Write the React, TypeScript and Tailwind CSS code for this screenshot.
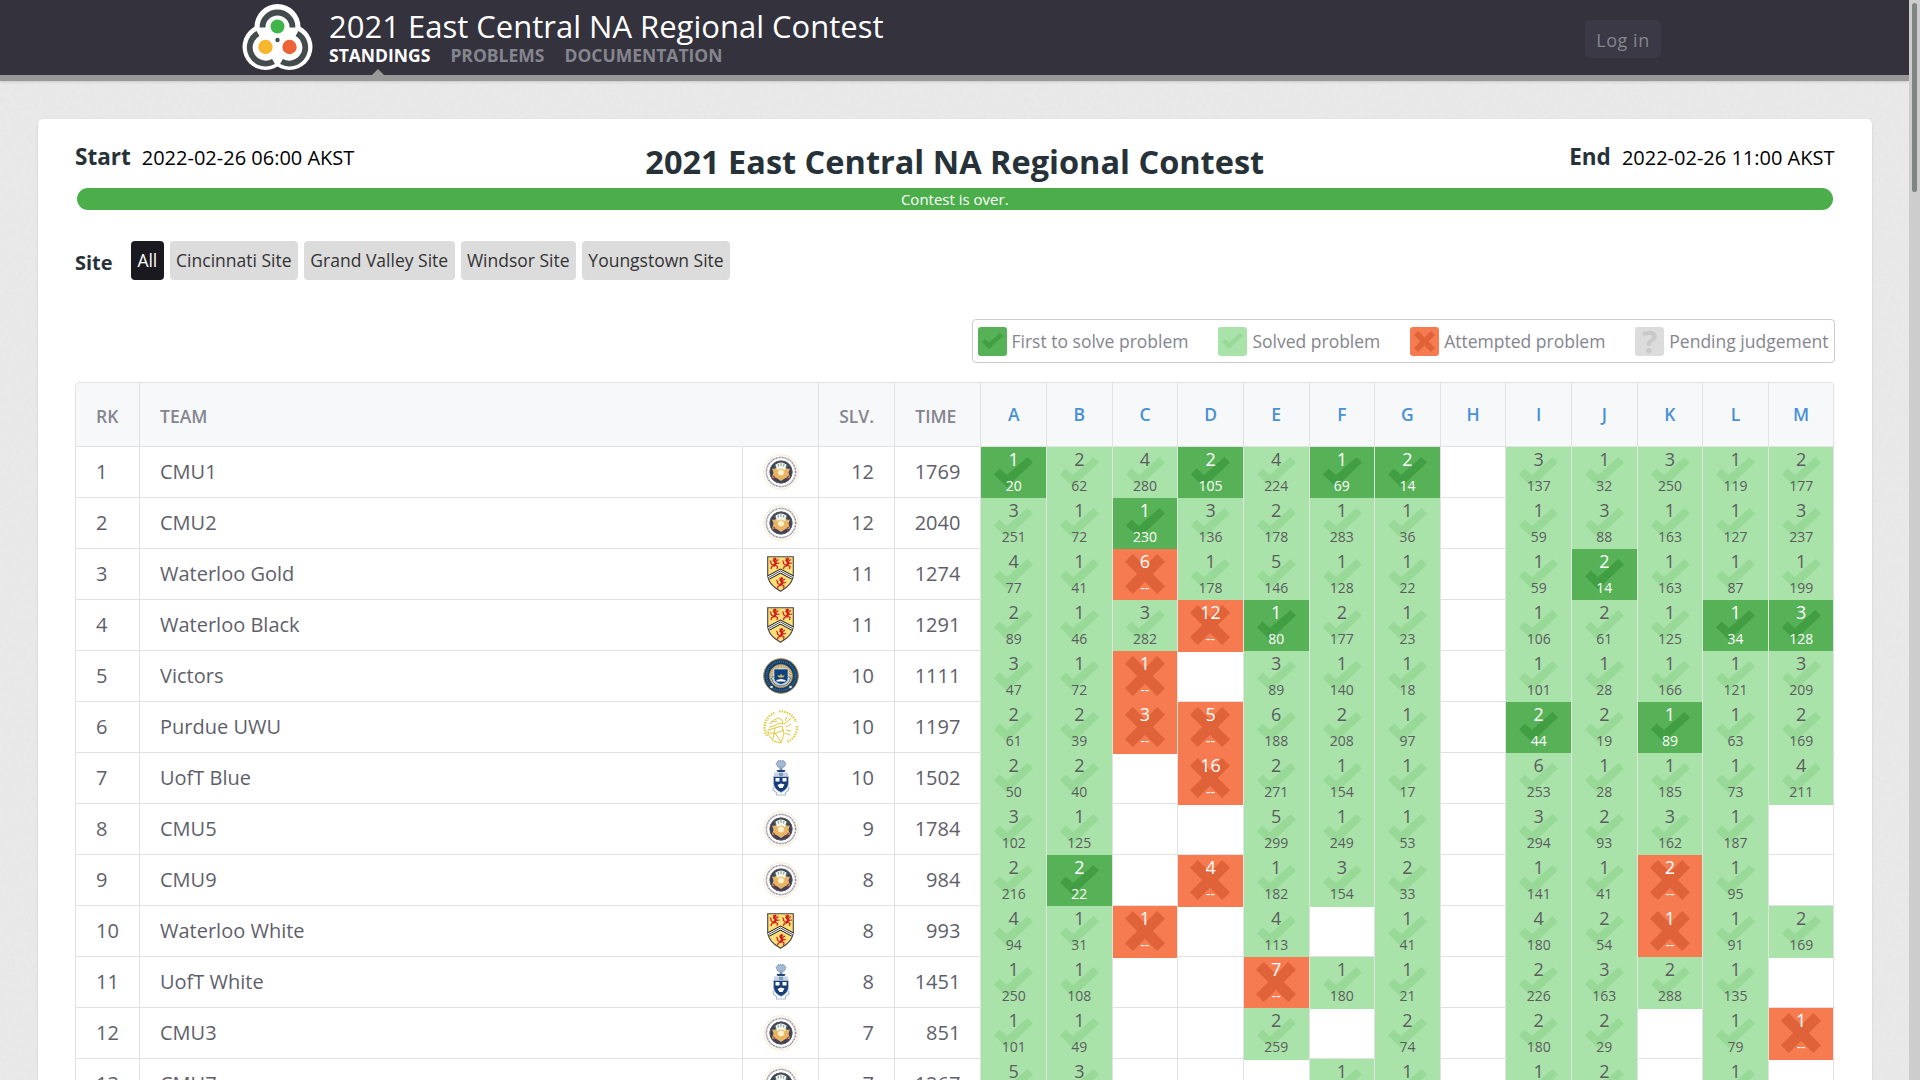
import React from "react";

type Cell = string;

const problems = "ABCDEFGHIJKLM".split("");

// Cell notation: "tries/time", "!" prefix = first to solve, "x" prefix = failed, "" = untouched.
type Row = { rk: number; team: string; logo: string; slv: number; time: number; cells: string };

const rows: Row[] = [
  { rk: 1, team: "CMU1", logo: "cmu", slv: 12, time: 1769, cells: "!1/20,2/62,4/280,!2/105,4/224,!1/69,!2/14,,3/137,1/32,3/250,1/119,2/177" },
  { rk: 2, team: "CMU2", logo: "cmu", slv: 12, time: 2040, cells: "3/251,1/72,!1/230,3/136,2/178,1/283,1/36,,1/59,3/88,1/163,1/127,3/237" },
  { rk: 3, team: "Waterloo Gold", logo: "waterloo", slv: 11, time: 1274, cells: "4/77,1/41,x6,1/178,5/146,1/128,1/22,,1/59,!2/14,1/163,1/87,1/199" },
  { rk: 4, team: "Waterloo Black", logo: "waterloo", slv: 11, time: 1291, cells: "2/89,1/46,3/282,x12,!1/80,2/177,1/23,,1/106,2/61,1/125,!1/34,!3/128" },
  { rk: 5, team: "Victors", logo: "michigan", slv: 10, time: 1111, cells: "3/47,1/72,x1,,3/89,1/140,1/18,,1/101,1/28,1/166,1/121,3/209" },
  { rk: 6, team: "Purdue UWU", logo: "purdue", slv: 10, time: 1197, cells: "2/61,2/39,x3,x5,6/188,2/208,1/97,,!2/44,2/19,!1/89,1/63,2/169" },
  { rk: 7, team: "UofT Blue", logo: "uoft", slv: 10, time: 1502, cells: "2/50,2/40,,x16,2/271,1/154,1/17,,6/253,1/28,1/185,1/73,4/211" },
  { rk: 8, team: "CMU5", logo: "cmu", slv: 9, time: 1784, cells: "3/102,1/125,,,5/299,1/249,1/53,,3/294,2/93,3/162,1/187," },
  { rk: 9, team: "CMU9", logo: "cmu", slv: 8, time: 984, cells: "2/216,!2/22,,x4,1/182,3/154,2/33,,1/141,1/41,x2,1/95," },
  { rk: 10, team: "Waterloo White", logo: "waterloo", slv: 8, time: 993, cells: "4/94,1/31,x1,,4/113,,1/41,,4/180,2/54,x1,1/91,2/169" },
  { rk: 11, team: "UofT White", logo: "uoft", slv: 8, time: 1451, cells: "1/250,1/108,,,x7,1/180,1/21,,2/226,3/163,2/288,1/135," },
  { rk: 12, team: "CMU3", logo: "cmu", slv: 7, time: 851, cells: "1/101,1/49,,,2/259,,2/74,,2/180,2/29,,1/79,x1" },
  { rk: 13, team: "CMU7", logo: "cmu", slv: 7, time: 1267, cells: "5/133,3/124,,,,1/217,1/48,,1/236,2/62,,1/187," },
];

function Check({ color, className }: { color: string; className: string }) {
  return (
    <svg viewBox="0 0 39 30" preserveAspectRatio="none" className={className} fill={color}>
      <path d="M0 17.5 5.500 11.500 13 18 33.500 0 39 5.500 13 30Z" />
    </svg>
  );
}

function Cross({ color, className }: { color: string; className: string }) {
  return (
    <svg viewBox="0 0 40 40" className={className} fill={color}>
      <path d="M7.800 0 20 12.200 32.200 0 40 7.800 27.800 20 40 32.200 32.200 40 20 27.800 7.800 40 0 32.200 12.200 20 0 7.800Z" />
    </svg>
  );
}

function CmuLogo() {
  return (
    <svg viewBox="0 0 36 36" className="size-9">
      <circle cx="18" cy="18" r="17.200" fill="#fff" stroke="#f6e3bd" strokeWidth=".8" />
      <circle cx="18" cy="18" r="14.600" fill="none" stroke="#8a8a9a" strokeWidth="1.600" strokeDasharray="1.200 .6 .7 .5" />
      <circle cx="18" cy="18" r="11.200" fill="#41405a" stroke="#55584f" strokeWidth=".9" />
      <path d="M11 11.500q7-6 14 0l-2 4H13Z" fill="#47705c" />
      <path d="M9 14.500q3 1 5-1l4 1 4-1q2 2 5 1l-1.500 4 1.500 5-4.500.5-4.500 3-4.500-3-4.500-.5 1.500-5Z" fill="#e8b565" />
      <path d="M12.500 10.500q5.500-4 11 0L22 16h-8Z" fill="#f2f5ee" />
      <path d="M15 9.500l.5 3M18 9v3M21 9.500l-.5 3" stroke="#4d7368" strokeWidth=".7" />
      <circle cx="18" cy="18.500" r="3.600" fill="#fdf0c8" stroke="#e3a850" strokeWidth=".8" />
      <path d="M10 22l2 1-1 3M26 22l-2 1 1 3" stroke="#8c3551" strokeWidth="1" fill="none" />
    </svg>
  );
}

function Lion({ x, y }: { x: number; y: number }) {
  return (
    <g transform={`translate(${x} ${y})`} fill="none" stroke="#cf1d1d">
      <path d="M6.500 1 4.500 3.500 6.500 6 4 9" strokeWidth="2.200" />
      <path d="M3.500 1.500 6.500 2.500M6 4.500 9 2.500M6.500 6.500 10 6M5.500 8 8 9.500 7.500 12M4.500 8.500 2 10 1.500 12M3.500 8Q1 7 1.500 5L.5 3.500" strokeWidth="1.200" />
    </g>
  );
}

function WaterlooLogo() {
  return (
    <svg viewBox="0 0 27 36" className="h-9 w-[27px]">
      <path d="M.7.7h25.600V18c0 8-5 12.500-12.800 17.200C5.700 30.500.7 26 .7 18Z" fill="#fedf78" stroke="#444" strokeWidth="1.100" />
      <Lion x={2.500} y={1} />
      <Lion x={15} y={1} />
      <Lion x={9} y={20.500} />
      <path d="M1.500 21.500 13.500 15 25.500 21.500" fill="none" stroke="#151515" strokeWidth="4.600" />
      <path d="M1.500 21.500 13.500 15 25.500 21.500" fill="none" stroke="#fff" strokeWidth="2.600" />
      <path d="M1.500 21.500 13.500 15 25.500 21.500" fill="none" stroke="#151515" strokeWidth=".8" />
    </svg>
  );
}

function MichiganLogo() {
  return (
    <svg viewBox="0 0 36 36" className="size-9">
      <circle cx="18" cy="18" r="17.300" fill="#153e68" stroke="#a88b50" strokeWidth="1" />
      <circle cx="18" cy="18" r="14.500" fill="none" stroke="#456e88" strokeWidth="1.800" strokeDasharray="1 1" />
      <circle cx="18" cy="18" r="11.500" fill="#d9d2ae" stroke="#a88b50" strokeWidth=".8" />
      <circle cx="18" cy="18" r="9.500" fill="none" stroke="#b3965a" strokeWidth="3" strokeDasharray=".7 .9" />
      <path d="M8.500 20q2 8 9.500 8t9.500-8l-3-2h-13Z" fill="#c9d3da" stroke="#5b7890" strokeWidth=".9" />
      <path d="M11 11h14v9.500q0 4-7 6-7-2-7-6Z" fill="#0d407f" stroke="#e9edf0" strokeWidth=".6" />
      <path d="M14 17.500h3l1-2 1 2h3l-2 2h-4Z" fill="#d5b35c" />
      <path d="M13.500 22l4.500-1 4.500 1v1.500h-9Z" fill="#fff" />
      <circle cx="8.500" cy="29" r="1.300" fill="#dfe9e9" />
      <circle cx="27.500" cy="29" r="1.300" fill="#dfe9e9" />
    </svg>
  );
}

function PurdueLogo() {
  return (
    <svg viewBox="0 0 36 36" className="size-9" fill="none" stroke="#e0ca3b">
      <path d="M4 27A16 16 0 0 1 12 3.500M16 2.500A16 16 0 0 1 33 13M34 17A16 16 0 0 1 24 33" strokeWidth="2.200" strokeDasharray="1.500 1.100" />
      <path d="M7 15q3-5 8-6l4 2 1 4-4-1-5 3-5 1M5 21l14-4 2 8-3 9-8-2-5-7ZM12 19l-2 11M5 24l7 0 6 9M11 25l10-4M8 13l6-1M21 15l4-3M23 18l5-3M23 21l5 1M22 24l5 2M22 12l2-4M25 12l3-3" strokeWidth="1" />
    </svg>
  );
}

function UoftLogo() {
  return (
    <svg viewBox="0 0 18 36" className="h-9 w-[18px]">
      <path d="M6 .8h6l2 3-2 3.400h-6l-2-3.400Z" fill="#a5b9d0" stroke="#6c8ab0" strokeWidth="1" strokeDasharray="1.200 .6" />
      <path d="M7.500 7.500h3v3h-3Z" fill="#7794b6" />
      <path d="M4.500 10h9l-1 2h-7Z" fill="#24477e" />
      <path d="M2 12.500h5v4H2ZM11 12.500h5v4h-5Z" fill="#c4d2e3" />
      <path d="M7 12.500h4v4H7Z" fill="#7f9bbe" />
      <path d="M1.500 16.500h15V23q0 6-7.500 9.500Q1.500 29 1.500 23Z" fill="#173d78" stroke="#afc1d9" strokeWidth=".8" />
      <path d="M3.500 18h4v3.500h-4ZM10.500 18h4v3.500h-4ZM5.500 25l3.500-1.500 3.500 1-2 3.500H7.500Z" fill="#fff" />
      <path d="M1.200 27v3l3.300 2.500v2.500h9v-2.500l3.300-2.500v-3" fill="none" stroke="#a8bdd7" strokeWidth="1.200" />
    </svg>
  );
}

function TeamLogo({ kind }: { kind: string }) {
  if (kind === "cmu") return <CmuLogo />;
  if (kind === "waterloo") return <WaterlooLogo />;
  if (kind === "michigan") return <MichiganLogo />;
  if (kind === "purdue") return <PurdueLogo />;
  return <UoftLogo />;
}

function SiteLogo() {
  return (
    <svg viewBox="0 0 71 66" className="h-[66px] w-[71px] shrink-0">
      <g fill="#fff">
        <circle cx="35.500" cy="23" r="23" />
        <circle cx="23.500" cy="43" r="23" />
        <circle cx="47.500" cy="43" r="23" />
      </g>
      <g fill="none" stroke="#434b4d" strokeWidth="5.800">
        <path d="M20.500 23.500A15 15 0 0 1 50.500 23.500" />
        <path d="M16 29.500A15.500 15.500 0 0 0 31.500 57.500" />
        <path d="M55 29.500A15.500 15.500 0 0 1 39.500 57.500" />
      </g>
      <circle cx="35.500" cy="22.500" r="7" fill="#40b54a" />
      <circle cx="23.500" cy="43" r="7.200" fill="#f6b72c" />
      <circle cx="47.500" cy="43" r="7.200" fill="#ec6338" />
      <circle cx="35.500" cy="36" r="2.200" fill="#434b4d" />
    </svg>
  );
}

function Result({ cell }: { cell: Cell }) {
  if (!cell) return <div className="border-r border-[#e2e2e2]" />;
  const failed = cell[0] === "x";
  const first = cell[0] === "!";
  const [tries, time] = cell.replace(/[x!]/, "").split("/");
  const tone = failed ? "bg-[#f67b50] text-white" : first ? "bg-[#57b157] text-white" : "bg-[#a9e3aa] text-[#5c5c60]";
  return (
    <div className={"relative border-r border-[#e2e2e2] text-center " + tone}>
      {failed ? (
        <Cross color="#df6238" className="absolute top-[5px] left-3 size-10" />
      ) : (
        <Check color={first ? "#429e42" : "#98d998"} className="absolute top-[10px] left-[13px] h-[30px] w-[39px]" />
      )}
      <div className="relative h-[26px] text-[18px] leading-[25px]">{tries}</div>
      <div className="relative text-[14px] leading-[26px]">{failed ? "--" : time}</div>
    </div>
  );
}

const grid = "grid grid-cols-[64px_603px_76px_76px_86.4px_repeat(13,minmax(0,1fr))]";

function LegendItem({ label, children, tone }: { label: string; children: React.ReactNode; tone: string }) {
  return (
    <div className="flex items-center gap-[5px]">
      <div className={"flex size-[29px] items-center justify-center rounded-[3px] " + tone}>{children}</div>
      <span>{label}</span>
    </div>
  );
}

function PaperTexture() {
  return (
    <svg className="absolute inset-0 h-[1080px] w-[1909px] opacity-[0.06]" aria-hidden="true">
      <filter id="paper">
        <feTurbulence type="fractalNoise" baseFrequency="0.25" numOctaves="3" />
        <feColorMatrix type="saturate" values="0" />
      </filter>
      <rect width="100%" height="100%" filter="url(#paper)" />
    </svg>
  );
}

export default function App() {
  return (
    <div className="relative flex h-[1080px] w-[1920px] overflow-hidden bg-[#eaeaea] font-['Open_Sans',sans-serif]">
      <PaperTexture />
      <div className="relative flex w-[1909px] flex-col">
        <header className="h-[81px] shrink-0 border-b-[6px] border-[#999] bg-[#33323d] shadow-sm">
          <div className="flex h-[75px] pl-[241.5px]">
            <div className="pt-[4px]"><SiteLogo /></div>
            <div className="ml-[16.5px] flex-1">
              <div className="h-[43px] pt-[4px] text-[31px] leading-[44px] whitespace-nowrap text-white">2021 East Central NA Regional Contest</div>
              <nav className="flex gap-5 text-[17.5px] leading-[24px] font-bold text-[#85858e]">
                <a className="relative text-white">
                  STANDINGS
                  <svg viewBox="0 0 12 6" className="absolute top-[26px] left-1/2 -ml-[8px] h-[6px] w-3 fill-[#999]"><path d="M6 0 12 6H0Z" /></svg>
                </a>
                <a>PROBLEMS</a>
                <a>DOCUMENTATION</a>
              </nav>
            </div>
            <button className="mt-5 mr-[248px] h-[38px] w-[76px] rounded-[5px] bg-[#3a3945] pt-[3px] text-[18px] font-medium tracking-[0.03em] text-[#85858e]">Log in</button>
          </div>
        </header>

        <main className="mt-[38px] ml-[38px] w-[1834px] flex-1 rounded-t-[5px] bg-white pr-[37.5px] pl-[37px] shadow-sm">
          <div className="grid h-[69px] grid-cols-[1fr_auto_1fr]">
            <div className="flex items-baseline gap-[11px] pt-[21px]">
              <span className="text-[22.5px] leading-[34px] font-bold text-[#263238]">Start</span>
              <span className="text-[20px] text-black">2022-02-26 06:00 AKST</span>
            </div>
            <h1 className="pt-[19px] text-[32.5px] leading-[48px] font-bold text-[#263238]">2021 East Central NA Regional Contest</h1>
            <div className="flex items-baseline justify-end gap-[11px] pt-[21px]">
              <span className="text-[22.5px] leading-[34px] font-bold text-[#263238]">End</span>
              <span className="text-[20px] text-black">2022-02-26 11:00 AKST</span>
            </div>
          </div>
          <div className="mx-[2px] h-[22px] rounded-full bg-[#4bae4b] text-center text-[15px] leading-[22px] text-white">Contest is over.</div>

          <div className="mt-[31px] flex items-center gap-[6px] text-[17.5px] text-[#333]">
            <span className="w-[50px] pt-1 text-[20px] font-bold text-[#263238]">Site</span>
            <span className="flex h-[39px] items-center rounded-[4px] bg-[#1a191f] px-[6.4px] text-white">All</span>
            {["Cincinnati Site", "Grand Valley Site", "Windsor Site", "Youngstown Site"].map((s) => (
              <span key={s} className="flex h-[39px] items-center rounded-[4px] bg-[#dcdcdc] px-[6.4px]">{s}</span>
            ))}
          </div>

          <div className="mt-[39px] ml-auto flex h-[44px] w-[863px] items-center justify-between rounded-[4px] border border-[#ccc] px-[5px] text-[17.5px] text-[#85858e]">
            <LegendItem label="First to solve problem" tone="bg-[#57b157]"><Check color="#429e42" className="h-[16px] w-[21px]" /></LegendItem>
            <LegendItem label="Solved problem" tone="bg-[#a9e3aa]"><Check color="#98d998" className="h-[16px] w-[21px]" /></LegendItem>
            <LegendItem label="Attempted problem" tone="bg-[#f67b50]"><Cross color="#df6238" className="size-[21px]" /></LegendItem>
            <LegendItem label="Pending judgement" tone="bg-[#dcdcdc]"><span className="text-[31px] leading-none font-bold text-[#c9c9c9]">?</span></LegendItem>
          </div>

          <div className="mt-[19px] rounded-t-[5px] border-t border-l border-[#e2e2e2] text-[20px] text-[#5f5f6b]">
            <div className={grid + " h-[64px] overflow-hidden rounded-t-[4px] border-b border-[#e2e2e2] bg-[#f7f8fa] text-[17.5px] font-semibold text-[#85858e]"}>
              <div className="flex items-center border-r border-[#e2e2e2] pt-1 pl-5">RK</div>
              <div className="flex items-center pt-1 pl-5">TEAM</div>
              <div className="border-r border-[#e2e2e2]" />
              <div className="flex items-center justify-end border-r border-[#e2e2e2] pt-1 pr-5">SLV.</div>
              <div className="flex items-center justify-end border-r border-[#e2e2e2] pt-1 pr-6">TIME</div>
              {problems.map((p) => (
                <div key={p} className="flex items-center justify-center border-r border-[#e2e2e2] text-[#4a90d4]">{p}</div>
              ))}
            </div>
            {rows.map((r) => (
              <div key={r.rk} className={grid + " h-[51px] border-b border-[#e2e2e2]"}>
                <div className="flex items-center border-r border-[#e2e2e2] pb-[2px] pl-5">{r.rk}</div>
                <div className="flex items-center border-r border-[#e2e2e2] pb-[2px] pl-5">{r.team}</div>
                <div className="flex items-center justify-center border-r border-[#e2e2e2] pb-[2px]"><TeamLogo kind={r.logo} /></div>
                <div className="flex items-center justify-end border-r border-[#e2e2e2] pr-5 pb-[2px]">{r.slv}</div>
                <div className="flex items-center justify-end border-r border-[#e2e2e2] pr-5 pb-[2px]">{r.time}</div>
                {r.cells.split(",").map((c, i) => (
                  <Result key={problems[i]} cell={c} />
                ))}
              </div>
            ))}
          </div>
        </main>
      </div>
      <div className="relative w-[11px] bg-[#cdcdcd] pt-[3px] pl-[3px]">
        <div className="h-[189px] w-[5px] rounded-full bg-[#7f8484]" />
      </div>
    </div>
  );
}
